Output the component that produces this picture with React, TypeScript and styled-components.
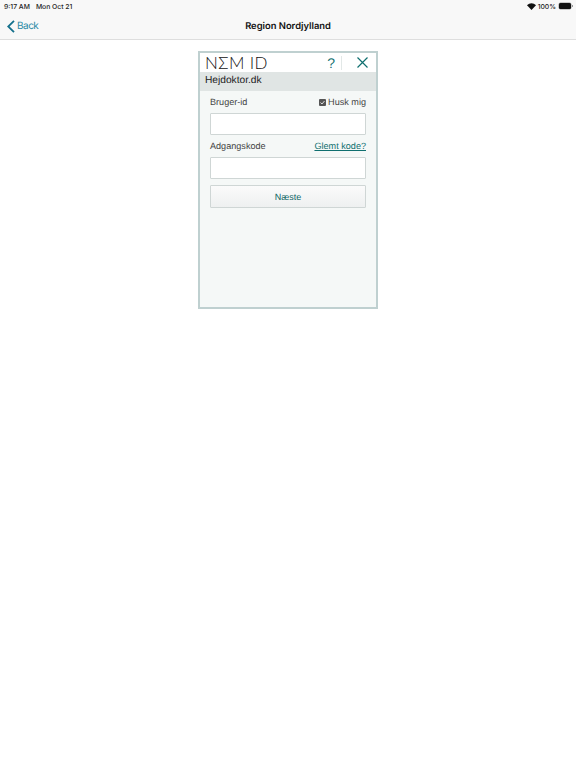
import { createGlobalStyle } from "styled-components";
import styled from "styled-components";

const GlobalStyle = createGlobalStyle`
  html, body {
    margin: 0;
    padding: 0;
    background: #fff;
    font-family: "Liberation Sans", Arial, sans-serif;
    text-rendering: geometricPrecision;
  }
`;

const Page = styled.div`
  width: 576px;
  height: 768px;
  display: flex;
  flex-direction: column;
  background: #fff;
  overflow: hidden;
`;

const Header = styled.header`
  height: 39px;
  flex: none;
  background: #f8f8f8;
  border-bottom: 1px solid #dedede;
  display: flex;
  flex-direction: column;
`;

const StatusBar = styled.div`
  height: 12px;
  padding: 0 4px;
  display: flex;
  align-items: center;
  justify-content: space-between;
  font-size: 6.8px;
  color: #222;
  font-family: Inter, "Liberation Sans", sans-serif;
  font-weight: 500;
`;

const StatusGroup = styled.div`
  display: flex;
  align-items: center;
  gap: 6px;
`;

const StatusRight = styled(StatusGroup)`
  gap: 2px;
`;

const Battery = styled.span`
  position: relative;
  width: 12px;
  height: 5.5px;
  background: #111;
  border-radius: 1.5px;
  margin: 0 1px 0 1px;
  box-shadow: 0 0 0 0.5px #999;

  &::after {
    content: "";
    position: absolute;
    right: -2px;
    top: 1.5px;
    width: 1px;
    height: 2.5px;
    background: #999;
  }
`;

const NavBar = styled.div`
  flex: 1;
  display: grid;
  grid-template-columns: 1fr auto 1fr;
  align-items: center;
  padding-top: 1px;
`;

const BackLink = styled.a`
  display: flex;
  align-items: center;
  gap: 2px;
  padding-left: 7px;
  color: #2a8aa6;
  font-size: 10px;
  letter-spacing: -0.5px;
  font-family: Inter, "Liberation Sans", sans-serif;
`;

const Title = styled.div`
  font-size: 9.4px;
  font-weight: 600;
  color: #111;
  font-family: Inter, "Liberation Sans", sans-serif;
`;

const Content = styled.main`
  flex: 1;
  display: flex;
  justify-content: center;
  padding-top: 11px;
`;

const Frame = styled.section`
  width: 180px;
  height: 258px;
  box-sizing: border-box;
  border: 2px solid #bfd0d0;
  background: #f5f8f7;
  display: flex;
  flex-direction: column;
`;

const LogoRow = styled.div`
  height: 19px;
  padding: 0 8px 0 5px;
  background: #fff;
  display: flex;
  align-items: center;
  justify-content: space-between;
`;

const Logo = styled.div`
  font-family: Lato, "Open Sans", sans-serif;
  font-weight: 300;
  font-size: 17px;
  letter-spacing: 0.4px;
  color: #111;
  line-height: 18px;
  white-space: nowrap;
`;

const Tools = styled.div`
  display: flex;
  align-items: center;
  color: #0f6f6f;
`;

const Help = styled.span`
  font-size: 14px;
  line-height: 14px;
  padding-right: 6px;
  border-right: 1px solid #e2e8e7;
  margin-right: 15px;
`;

const SiteBar = styled.div`
  height: 19px;
  background: #e0e5e4;
  padding: 0 5px 3px;
  display: flex;
  align-items: center;
  box-sizing: border-box;
  font-size: 10.2px;
  color: #222;
`;

const Form = styled.form`
  padding: 0 10px;
  display: flex;
  flex-direction: column;
`;

const LabelRow = styled.div`
  height: 22px;
  display: flex;
  align-items: center;
  justify-content: space-between;
  font-size: 9.1px;
  color: #444;
`;

const Remember = styled.span`
  display: flex;
  align-items: center;
  gap: 2px;
`;

const Check = styled.span`
  width: 7px;
  height: 7px;
  background: #555;
  border-radius: 1px;
  display: flex;
`;

const Forgot = styled.a`
  color: #0f6f6f;
  text-decoration: underline;
`;

const Input = styled.div`
  height: 22px;
  box-sizing: border-box;
  background: #fff;
  border: 1px solid #cfd6d5;
  border-radius: 1px;
`;

const Button = styled.div`
  margin-top: 6px;
  height: 23px;
  box-sizing: border-box;
  border: 1px solid #cfd6d5;
  border-radius: 1px;
  background: linear-gradient(#fbfbfb, #eef0f0);
  color: #0f6666;
  font-size: 9px;
  display: flex;
  align-items: center;
  justify-content: center;
`;

export default function App() {
  return (
    <Page>
      <GlobalStyle />
      <Header>
        <StatusBar>
          <StatusGroup>
            <span>9:17 AM</span>
            <span>Mon Oct 21</span>
          </StatusGroup>
          <StatusRight>
            <svg width="9" height="7" viewBox="0 0 18 14">
              <path d="M9 14 0 4.5C5-1 13-1 18 4.5Z" fill="#111" />
            </svg>
            <span>100%</span>
            <Battery />
          </StatusRight>
        </StatusBar>
        <NavBar>
          <BackLink>
            <svg width="8" height="13" viewBox="0 0 8 13" fill="none">
              <path d="M7 .8 1.2 6.5 7 12.2" stroke="#14708c" strokeWidth="1.8" />
            </svg>
            Back
          </BackLink>
          <Title>Region Nordjylland</Title>
          <span />
        </NavBar>
      </Header>
      <Content>
        <Frame>
          <LogoRow>
            <Logo>NΣM ID</Logo>
            <Tools>
              <Help>?</Help>
              <svg width="11" height="11" viewBox="0 0 11 11">
                <path d="M.5.5 10.5 10.5M10.5.5.5 10.5" stroke="#0f6f6f" strokeWidth="1.2" />
              </svg>
            </Tools>
          </LogoRow>
          <SiteBar>Hejdoktor.dk</SiteBar>
          <Form>
            <LabelRow>
              <span>Bruger-id</span>
              <Remember>
                <Check>
                  <svg width="7" height="7" viewBox="0 0 7 7" fill="none">
                    <path d="M1.5 3.5 3 5 5.5 2" stroke="#fff" strokeWidth="0.8" />
                  </svg>
                </Check>
                Husk mig
              </Remember>
            </LabelRow>
            <Input />
            <LabelRow>
              <span>Adgangskode</span>
              <Forgot>Glemt kode?</Forgot>
            </LabelRow>
            <Input />
            <Button>Næste</Button>
          </Form>
        </Frame>
      </Content>
    </Page>
  );
}
